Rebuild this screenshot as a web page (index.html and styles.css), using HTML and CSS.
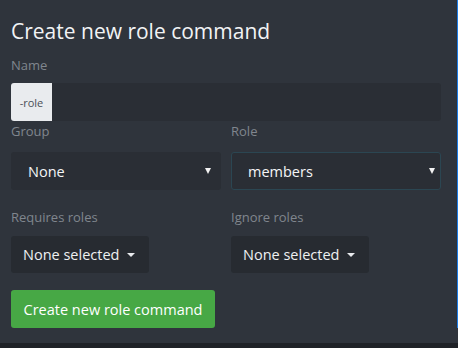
FILE: index.html
```html
<!DOCTYPE html>
<html>
<head>
<meta charset="utf-8">
<link rel="stylesheet" href="styles.css">
</head>
<body>
<div class="frame">
  <div class="panel">
    <h1 class="title">Create new role command</h1>
    <div class="field">
      <label class="label">Name</label>
      <div class="input-group">
        <span class="addon">-role</span>
        <div class="input"></div>
      </div>
    </div>
    <div class="row">
      <div class="col">
        <label class="label">Group</label>
        <div class="select"><span>None</span><span class="tri"></span></div>
      </div>
      <div class="col">
        <label class="label">Role</label>
        <div class="select focused"><span>members</span><span class="tri"></span></div>
      </div>
    </div>
    <div class="row row2">
      <div class="col">
        <label class="label">Requires roles</label>
        <div class="multi"><span>None selected</span><span class="caret"></span></div>
      </div>
      <div class="col">
        <label class="label">Ignore roles</label>
        <div class="multi"><span>None selected</span><span class="caret"></span></div>
      </div>
    </div>
    <button class="btn">Create new role command</button>
  </div>
  <div class="accent"></div>
</div>
<div class="footer"></div>
</body>
</html>
```

FILE: styles.css
```css
* { box-sizing: border-box; }
html, body { margin: 0; padding: 0; }
body {
  width: 458px;
  height: 348px;
  background: #2f343c;
  font-family: "Open Sans", "Noto Sans", sans-serif;
  color: #e8eaed;
  overflow: hidden;
}
.frame {
  display: flex;
  height: 343px;
}
.panel {
  flex: 1;
  padding: 16px 16px 0 11px;
}
.accent {
  width: 2px;
  height: 328px;
  background: #1b7be6;
}
.footer {
  height: 5px;
  background: #1f2227;
}
.title {
  margin: 0;
  font-size: 21px;
  font-weight: 400;
  line-height: 30px;
  color: #f2f3f5;
}
.label {
  display: block;
  font-size: 13px;
  line-height: 18px;
  color: #80868e;
}
.field { margin-top: 10px; }
.field .label { margin-bottom: 9px; }
.input-group {
  display: flex;
  height: 38px;
  width: 430px;
}
.addon {
  width: 41px;
  background: #e9ebee;
  color: #4a4f57;
  font-size: 11px;
  border-radius: 3px 0 0 3px;
  display: flex;
  align-items: center;
  justify-content: center;
}
.input {
  flex: 1;
  background: #2a2e35;
  border-radius: 0 3px 3px 0;
}
.row {
  display: flex;
  gap: 10px;
  width: 430px;
  margin-top: 1px;
}
.row .label { margin-bottom: 12px; }
.col { flex: 1; }
.select {
  height: 38px;
  background: #2a2e35;
  border-radius: 3px;
  display: flex;
  align-items: center;
  justify-content: space-between;
  padding: 0 10px 0 17px;
  font-size: 14.5px;
  color: #f4f5f7;
}
.select.focused {
  border: 1px solid #2b4652;
  padding-left: 16px;
  padding-right: 5px;
}
.tri {
  width: 0;
  height: 0;
  border-left: 3px solid transparent;
  border-right: 3px solid transparent;
  border-top: 6px solid #f2f2f2;
}
.row2 { margin-top: 18px; }
.row2 .label { margin-bottom: 10px; }
.multi {
  display: inline-flex;
  align-items: center;
  gap: 8px;
  height: 37px;
  background: #272b31;
  border-radius: 3px;
  padding: 0 14px 0 12px;
  font-size: 14.5px;
  color: #eef0f2;
}
.caret {
  width: 0;
  height: 0;
  border-left: 4px solid transparent;
  border-right: 4px solid transparent;
  border-top: 4px solid #e8eaed;
}
.btn {
  display: block;
  margin-top: 17px;
  height: 38px;
  width: 204px;
  background: #47a845;
  border: none;
  border-radius: 3px;
  color: #ffffff;
  font-family: "Open Sans", "Noto Sans", sans-serif;
  font-size: 14.5px;
  padding: 0;
}
```
